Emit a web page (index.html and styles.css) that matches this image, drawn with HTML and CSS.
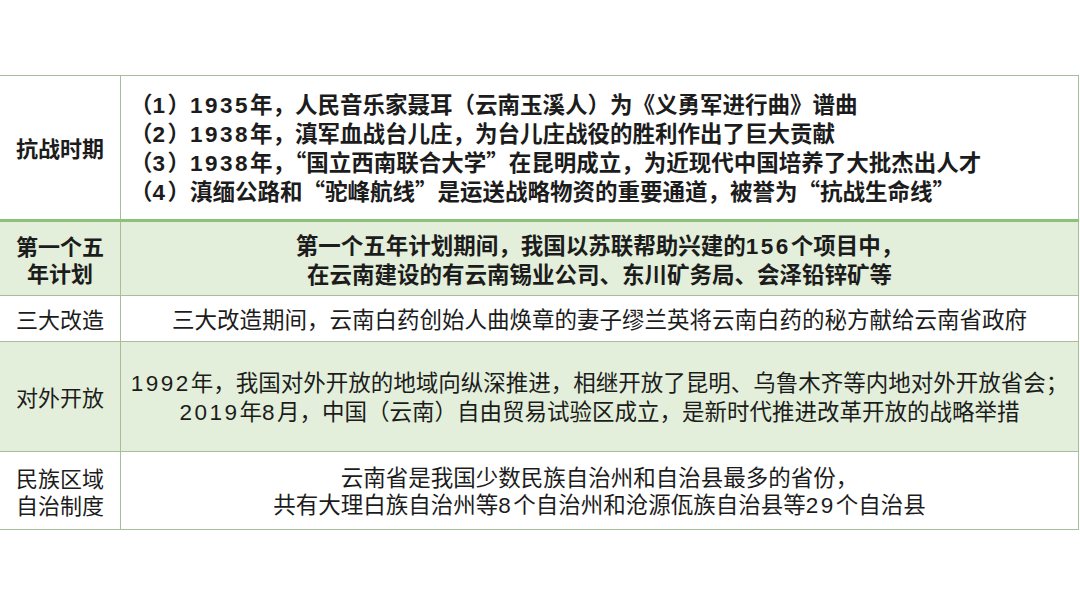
FILE: index.html
```html
<!DOCTYPE html>
<html lang="zh">
<head>
<meta charset="utf-8">
<link rel="stylesheet" href="styles.css">
</head>
<body>
<table class="tbl">
  <tr class="r1">
    <th class="lab bold">抗战时期</th>
    <td class="txt left bold">（<span class="n">1</span>）<span class="n">1935</span>年，人民音乐家聂耳（云南玉溪人）为《义勇军进行曲》谱曲<br>（<span class="n">2</span>）<span class="n">1938</span>年，滇军血战台儿庄，为台儿庄战役的胜利作出了巨大贡献<br>（<span class="n">3</span>）<span class="n">1938</span>年，“国立西南联合大学”在昆明成立，为近现代中国培养了大批杰出人才<br>（<span class="n">4</span>）滇缅公路和“驼峰航线”是运送战略物资的重要通道，被誉为“抗战生命线”</td>
  </tr>
  <tr class="r2 green">
    <th class="lab bold">第一个五<br>年计划</th>
    <td class="txt bold">第一个五年计划期间，我国以苏联帮助兴建的<span class="n">156</span>个项目中，<br>在云南建设的有云南锡业公司、东川矿务局、会泽铅锌矿等</td>
  </tr>
  <tr class="r3">
    <th class="lab">三大改造</th>
    <td class="txt">三大改造期间，云南白药创始人曲焕章的妻子缪兰英将云南白药的秘方献给云南省政府</td>
  </tr>
  <tr class="r4 green">
    <th class="lab">对外开放</th>
    <td class="txt"><span class="n">1992</span>年，我国对外开放的地域向纵深推进，相继开放了昆明、乌鲁木齐等内地对外开放省会；<br><span class="n">2019</span>年<span class="n">8</span>月，中国（云南）自由贸易试验区成立，是新时代推进改革开放的战略举措</td>
  </tr>
  <tr class="r5">
    <th class="lab">民族区域<br>自治制度</th>
    <td class="txt">云南省是我国少数民族自治州和自治县最多的省份，<br>共有大理白族自治州等<span class="n">8</span>个自治州和沧源佤族自治县等<span class="n">29</span>个自治县</td>
  </tr>
</table>
</body>
</html>
```

FILE: styles.css
```css
html, body {
  margin: 0;
  padding: 0;
  background: #ffffff;
}
body {
  padding-top: 75px;
  font-family: "Noto Sans CJK SC", "Liberation Sans", sans-serif;
  color: #1c1c1c;
}
.tbl {
  border-collapse: collapse;
  width: 1080px;
  margin-left: -1px;
  table-layout: fixed;
}
.tbl th, .tbl td {
  border: 1px solid #a7bd9b;
  padding: 0;
  font-size: 22.5px;
  line-height: 27px;
  vertical-align: middle;
}
.tbl .lab {
  width: 120px;
  font-size: 22px;
  text-align: center;
  font-weight: 400;
}
.tbl .txt {
  text-align: center;
  font-weight: 400;
}
.tbl .left {
  text-align: left;
  padding-left: 9px;
}
.tbl .bold {
  font-weight: 700;
}
.n {
  font-family: "Liberation Sans", sans-serif;
  letter-spacing: 2.5px;
}
.green th, .green td {
  background: #e3efda;
}
.r1 { height: 145px; }
.r1 th, .r1 td { border-bottom: 3px solid #8cc276; }
.r2 { height: 75px; }
.r3 { height: 46px; }
.r4 { height: 110px; }
.r5 { height: 78px; }
```
